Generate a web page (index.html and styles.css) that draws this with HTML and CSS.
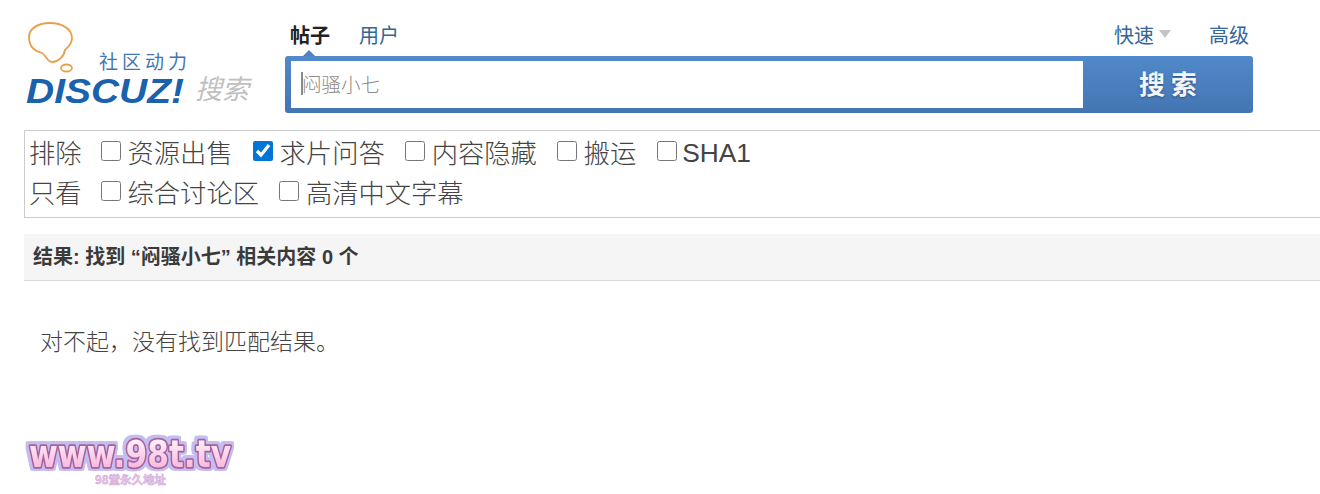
FILE: index.html
```html
<!DOCTYPE html>
<html lang="zh">
<head>
<meta charset="utf-8">
<title>搜索</title>
<link rel="stylesheet" href="styles.css">
</head>
<body>
<header class="head">
  <a class="logo" href="#">
    <svg width="228" height="90" viewBox="0 0 228 90">
      <path d="M5 18 C5 9 15 4 26 4 C38 4 48 10 48 19 C48 25 44 28 41 31 C40 38 34 43 28 43 C23 43 22 36 18 34 C10 32 5 27 5 18 Z" fill="none" stroke="#e8a048" stroke-width="1.8"/>
      <ellipse cx="42.5" cy="49" rx="5.5" ry="3.5" fill="none" stroke="#e8a048" stroke-width="1.8"/>
      <text class="logo-slogan" x="75" y="50">社区动力</text>
      <text class="logo-brand" x="2" y="84" textLength="158" lengthAdjust="spacingAndGlyphs">DISCUZ!</text>
      <text class="logo-search" x="171" y="80">搜索</text>
    </svg>
  </a>
  <div class="search">
    <nav class="tabs">
      <div class="tabs-left">
        <a class="tab tab-on" href="#">帖子</a>
        <a class="tab" href="#">用户</a>
      </div>
      <div class="tabs-right">
        <a class="tab" href="#">快速<i class="arrow"></i></a>
        <a class="tab" href="#">高级</a>
      </div>
    </nav>
    <form class="bar">
      <div class="field">
        <input class="q" type="text" value="闷骚小七">
      </div>
      <button class="go" type="button">搜 索</button>
    </form>
  </div>
</header>

<section class="filters">
  <div class="row">
    <span class="row-label">排除</span>
    <label class="opt"><input type="checkbox">资源出售</label>
    <label class="opt"><input type="checkbox" checked>求片问答</label>
    <label class="opt"><input type="checkbox">内容隐藏</label>
    <label class="opt"><input type="checkbox">搬运</label>
    <label class="opt"><input type="checkbox"><span class="latin">SHA1</span></label>
  </div>
  <div class="row">
    <span class="row-label">只看</span>
    <label class="opt"><input type="checkbox">综合讨论区</label>
    <label class="opt"><input type="checkbox">高清中文字幕</label>
  </div>
</section>

<h2 class="result-title">结果: 找到 “闷骚小七” 相关内容 0 个</h2>
<p class="empty">对不起，没有找到匹配结果。</p>

<svg class="mark" width="240" height="60" viewBox="0 0 240 60">
  <defs>
    <linearGradient id="markFill" x1="0" y1="0" x2="0" y2="1">
      <stop offset="0" stop-color="#fff"/>
      <stop offset="1" stop-color="#f7a8d6"/>
    </linearGradient>
  </defs>
  <text class="mark-text" x="120" y="36" fill="url(#markFill)" textLength="202" lengthAdjust="spacingAndGlyphs">www.98t.tv</text>
  <text class="mark-sub" x="120.5" y="53">98堂永久地址</text>
</svg>
</body>
</html>
```
FILE: styles.css
```css
* { box-sizing: border-box; }
html, body { margin: 0; padding: 0; }
body {
  position: relative;
  height: 494px;
  overflow: hidden;
  background: #fff;
  color: #333;
  font-family: "Liberation Sans", "Noto Sans CJK SC", sans-serif;
}
a { color: #369; text-decoration: none; }

.head { display: flex; padding: 19px 0 0 24px; height: 130px; }
.logo { display: block; width: 228px; height: 90px; margin-right: 33px; }
.logo-slogan { font: 400 19px "Noto Sans CJK SC", sans-serif; fill: #3f76b4; letter-spacing: 4px; }
.logo-brand { font: italic 700 35px "Liberation Sans", sans-serif; fill: #1a62ae; }
.logo-search { font: italic 400 27px "Noto Sans CJK SC", sans-serif; fill: #c0c0c0; }

.search { width: 968px; }
.tabs { display: flex; justify-content: space-between; height: 37px; padding: 5px 4px 0 5px; font-size: 20px; line-height: 24px; }
.tabs-left, .tabs-right { display: flex; }
.tabs-left { gap: 29px; }
.tabs-right { gap: 55px; }
.tab { display: block; position: relative; }
.tab-on { color: #222; font-weight: 700; }
.tab-on::after {
  content: "";
  position: absolute;
  left: 13px;
  top: 26px;
  border: 6px solid transparent;
  border-top: 0;
  border-bottom-color: #4f83c2;
}
.arrow { position: absolute; left: 45px; top: 6px; border: 6px solid transparent; border-bottom: 0; border-top: 8px solid #c4c4c4; }

.bar { display: flex; height: 57px; background: linear-gradient(#5189ca, #4475b3); border-radius: 3px; padding: 5px 0 5px 6px; }
.field { position: relative; width: 792px; background: #fff; }
.field::before {
  content: "";
  position: absolute;
  left: 10px;
  top: 11px;
  width: 2px;
  height: 23px;
  background: #8a8a8a;
}
.q {
  display: block;
  width: 100%;
  height: 100%;
  border: 0;
  outline: 0;
  padding: 0 0 2px 11px;
  background: transparent;
  color: #8c8c8c;
  font: 300 19.5px "Noto Sans CJK SC", sans-serif;
}
.go {
  flex: 1;
  border: 0;
  padding: 0 0 4px;
  background: transparent;
  color: #f4f4f4;
  font: 700 26px "Noto Sans CJK SC", sans-serif;
  text-shadow: 0 1px 2px #2b4f80;
}

.filters {
  margin-left: 24px;
  height: 88px;
  border: 1px solid #ccc;
  border-right: 0;
  font-size: 26.3px;
  font-weight: 300;
  color: #444;
}
.row { display: flex; align-items: center; height: 40px; padding-left: 4px; }
.row-label { width: 72px; }
.opt { display: flex; align-items: center; margin-right: 20.4px; }
.opt input { width: 20px; height: 20px; margin: 0 6.5px 1px 0; accent-color: #0075d6; }
.latin { margin-left: -1px; padding-top: 4px; }

.result-title {
  margin: 16px 0 0 24px;
  height: 47px;
  padding-left: 9px;
  background: #f5f5f5;
  border-bottom: 1px solid #d9d9d9;
  font-size: 20px;
  line-height: 46px;
  font-weight: 700;
  color: #3a3a3a;
}
.empty { margin: 44px 0 0 40px; font-size: 23px; line-height: 34px; font-weight: 300; color: #444; }

.mark { position: absolute; left: 10px; top: 431px; }
.mark-text {
  font: 700 37px "DejaVu Sans", sans-serif;
  text-anchor: middle;
  stroke: #a8609c;
  stroke-width: 3.5px;
  stroke-linejoin: round;
  paint-order: stroke;
  filter: drop-shadow(2.5px 0 0 #c4bdf0) drop-shadow(-2.5px 0 0 #c4bdf0) drop-shadow(0 2.5px 0 #c4bdf0) drop-shadow(0 -2.5px 0 #c4bdf0);
}
.mark-sub { font: 700 11.5px "Noto Sans CJK SC", sans-serif; text-anchor: middle; fill: #f3c6e4; stroke: #c4a6de; stroke-width: .5px; }
```
